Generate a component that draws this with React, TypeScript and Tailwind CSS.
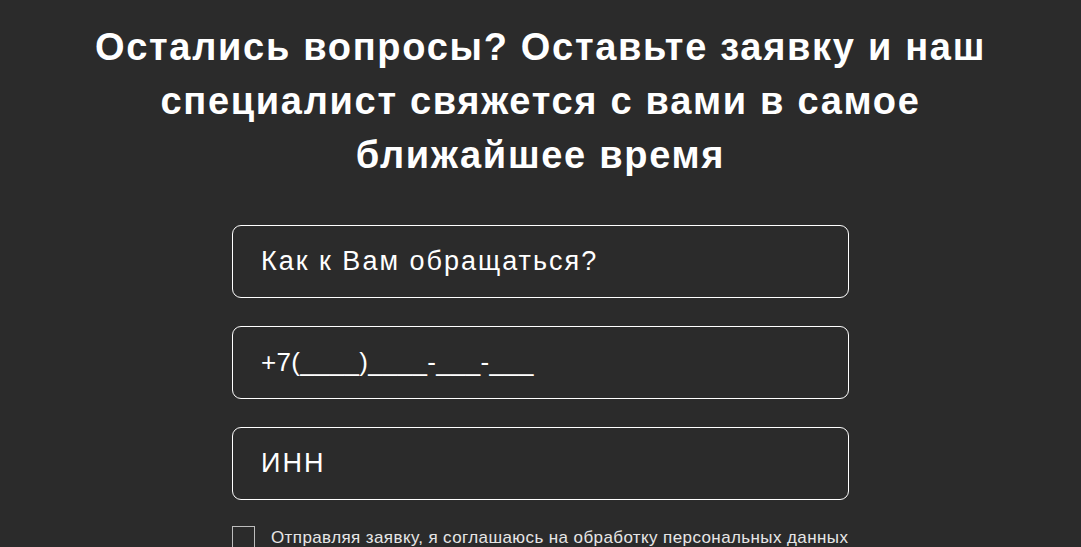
import React, { useState } from 'react';

const App: React.FC = () => {
  const [agree, setAgree] = useState(false);

  const fields = [
    { placeholder: 'Как к Вам обращаться?', cls: 'text-[27px] tracking-[2px]' },
    { placeholder: '+7(____)____-___-___', cls: 'text-[26px] tracking-[0.3px]' },
    { placeholder: 'ИНН', cls: 'text-[27px] tracking-[2px]' },
  ];

  return (
    <div
      className="min-h-screen w-full bg-[#2b2b2b] text-white"
      style={{ fontFamily: '"Liberation Sans", Arial, sans-serif' }}
    >
      <div className="flex flex-col items-center pt-[20px]">
        {/* Heading */}
        <h2 className="max-w-[960px] text-center text-[38px] font-bold leading-[54px] tracking-[1.7px] text-white">
          Остались вопросы? Оставьте заявку и наш специалист свяжется с вами в самое ближайшее время
        </h2>

        {/* Form */}
        <form className="mt-[43px] flex w-[617px] flex-col gap-[28px]">
          {fields.map((f, i) => (
            <input
              key={i}
              type="text"
              placeholder={f.placeholder}
              className={`h-[73px] w-full rounded-[9px] border border-white bg-transparent px-[28px] text-white outline-none placeholder:text-white ${f.cls}`}
            />
          ))}

          <label className="-mt-[2px] flex items-start gap-[16px]">
            <span
              onClick={() => setAgree(!agree)}
              className="h-[23px] w-[23px] shrink-0 border border-[#bdbdbd] bg-transparent"
            >
              {agree && <span className="block h-full w-full bg-white" />}
            </span>
            <span className="-mt-[1px] whitespace-nowrap text-[17px] leading-[25px] tracking-[0.4px] text-[#e6e6e6]">
              Отправляя заявку, я соглашаюсь на обработку персональных данных
            </span>
          </label>
        </form>
      </div>
    </div>
  );
};

export default App;
